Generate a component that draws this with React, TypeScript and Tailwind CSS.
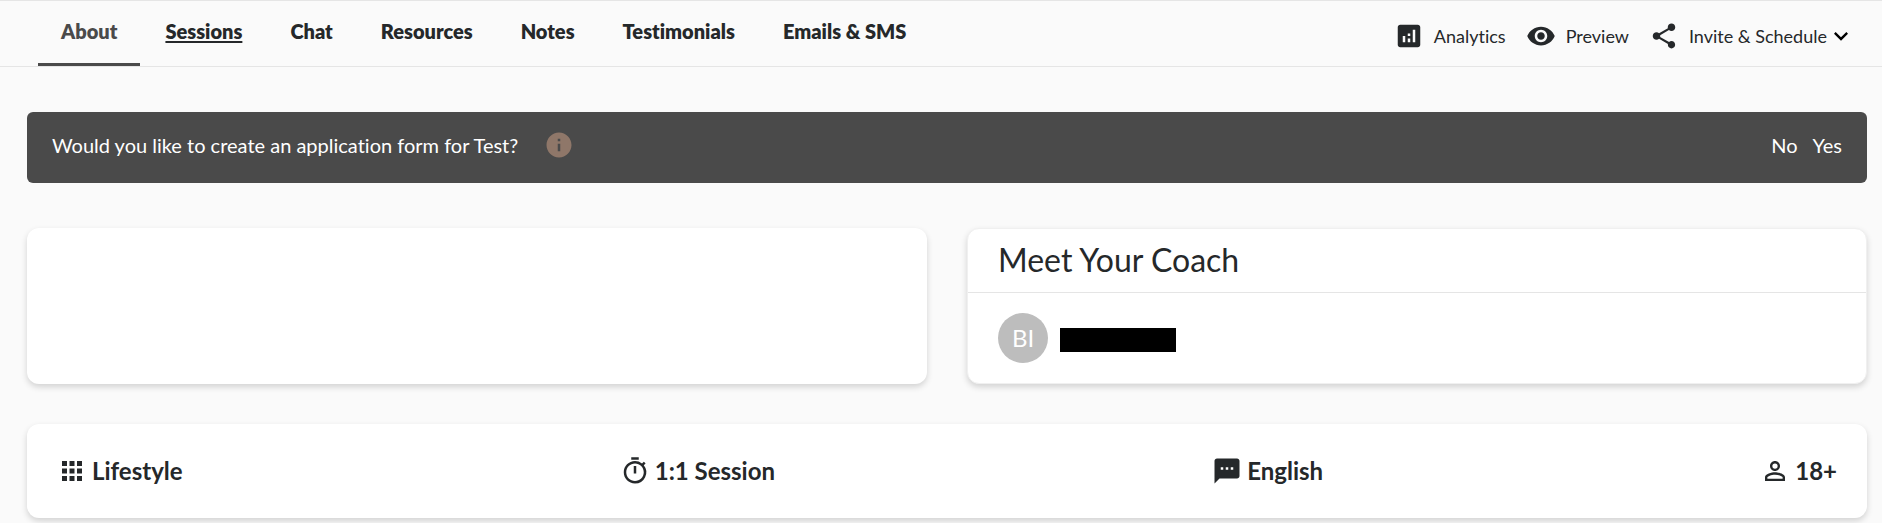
import {
  MdAnalytics,
  MdApps,
  MdInfo,
  MdKeyboardArrowDown,
  MdOutlineTimer,
  MdPersonOutline,
  MdShare,
  MdTextsms,
  MdVisibility,
} from "react-icons/md";

const tabs = ["About", "Sessions", "Chat", "Resources", "Notes", "Testimonials", "Emails & SMS"];

const facts = [
  { icon: MdApps, label: "Lifestyle" },
  { icon: MdOutlineTimer, label: "1:1 Session" },
  { icon: MdTextsms, label: "English" },
  { icon: MdPersonOutline, label: "18+" },
];

const card = "rounded-xl bg-white shadow-[0_3px_6px_rgba(0,0,0,0.16)]";

function tabClass(tab: string) {
  if (tab === "About") return "border-[#4a4a4a] text-[#4a4a4a]";
  if (tab === "Sessions") return "border-transparent underline underline-offset-2";
  return "border-transparent";
}

export default function App() {
  return (
    <div className="min-h-screen bg-[#fafafa] pb-1 font-['Lato','Noto_Sans',sans-serif] text-[#25282a] [font-variant-ligatures:none]">
      <header className="flex items-start justify-between border-y border-[#e5e5e5] pl-[38px] pr-[27px]">
        <nav className="flex gap-0.5">
          {tabs.map((tab) => (
            <a
              key={tab}
              href={"#" + tab.split(" ")[0].toLowerCase()}
              aria-current={tab === "About" ? "page" : undefined}
              className={"border-b-3 px-[23px] pb-[19px] pt-[18px] text-xl leading-[25px] font-extrabold whitespace-nowrap " + tabClass(tab)}
            >
              {tab}
            </a>
          ))}
        </nav>
        <div className="flex items-center gap-5 pt-5 text-lg leading-[30px]">
          <button type="button" className="flex items-center gap-2.5">
            <MdAnalytics size={30} />
            Analytics
          </button>
          <button type="button" className="flex items-center gap-2.5">
            <MdVisibility size={30} />
            Preview
          </button>
          <button type="button" className="flex items-center gap-2.5">
            <MdShare size={30} />
            <span className="flex items-center">
              Invite &amp; Schedule
              <MdKeyboardArrowDown size={28} className="text-black" />
            </span>
          </button>
        </div>
      </header>

      <main className="flex flex-col gap-10 pl-[27px] pr-[15px] pt-[45px]">
        <section className="mb-[5px] flex items-center justify-between rounded-md bg-[#4a4a4a] px-[25px] pb-[23px] pt-[18px] text-xl leading-[30px] text-white">
          <div className="flex items-center gap-[26px]">
            <p>Would you like to create an application form for Test?</p>
            <button type="button" aria-label="About application forms" className="text-[#8f7769]">
              <MdInfo size={30} />
            </button>
          </div>
          <div className="flex gap-[15px]">
            <button type="button">No</button>
            <button type="button">Yes</button>
          </div>
        </section>

        <div className="grid grid-cols-2 gap-10">
          <section className={card} />
          <section className={card + " border border-[#f0f0f0]"}>
            <h2 className="border-b border-[#e5e5e5] px-[30px] pb-3.5 pt-3 text-[32px] leading-[37px]">Meet Your Coach</h2>
            <div className="flex items-center gap-3 px-[30px] py-5">
              <div className="flex size-[50px] items-center justify-center rounded-full bg-[#bdbdbd] text-2xl text-white">BI</div>
              <div className="mt-1 h-6 w-[116px] bg-black" />
            </div>
          </section>
        </div>

        <section className={card + " px-[30px] py-8"}>
          <ul className="flex items-center justify-between">
            {facts.map(({ icon: Icon, label }) => (
              <li key={label} className="flex items-center gap-[5px] text-2xl leading-[30px] font-bold">
                <Icon size={30} />
                {label}
              </li>
            ))}
          </ul>
        </section>
      </main>
    </div>
  );
}
